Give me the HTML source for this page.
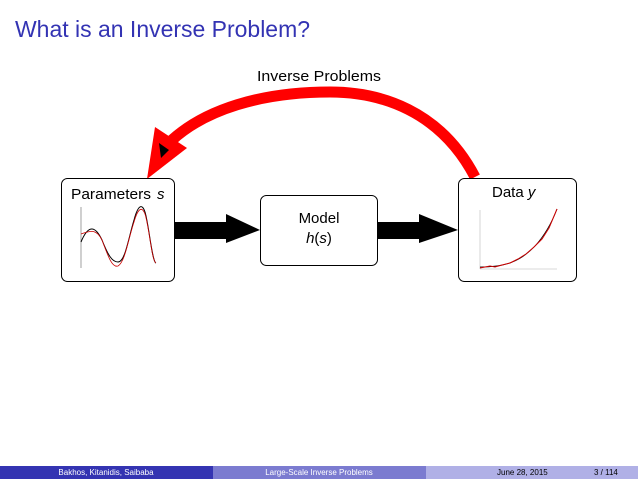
<!DOCTYPE html>
<html><head><meta charset="utf-8"><style>
body{margin:0;background:#fff}
svg{display:block}
text{font-family:"Liberation Sans",sans-serif}
</style></head><body>
<svg width="638" height="479" viewBox="0 0 638 479" xmlns="http://www.w3.org/2000/svg">
<text x="15" y="37" font-size="23" fill="#3333b3" textLength="295" lengthAdjust="spacingAndGlyphs">What is an Inverse Problem?</text>
<text x="257" y="81" font-size="15" fill="#000" textLength="124" lengthAdjust="spacingAndGlyphs">Inverse Problems</text>
<!-- red arc -->
<path d="M475 177 C440 110 380 92 330 92 C260 92 205 110 172 140" fill="none" stroke="#f00" stroke-width="11"/>
<polygon points="147,179 155,127 187,148" fill="#f00"/>
<polygon points="159,143 169,150 161,158" fill="#000"/>
<!-- boxes -->
<rect x="61.5" y="178.5" width="113" height="103" rx="6" fill="#fff" stroke="#000" stroke-width="1"/>
<text x="71" y="199" font-size="15" textLength="80" lengthAdjust="spacingAndGlyphs">Parameters</text><text x="157" y="199" font-size="15" font-style="italic">s</text>
<rect x="260.5" y="195.5" width="117" height="70" rx="6" fill="#fff" stroke="#000"/>
<text x="319" y="223" font-size="15" text-anchor="middle">Model</text>
<text x="319" y="243" font-size="15" text-anchor="middle"><tspan font-style="italic">h</tspan>(<tspan font-style="italic">s</tspan>)</text>
<rect x="458.5" y="178.5" width="118" height="103" rx="6" fill="#fff" stroke="#000"/>
<text x="492" y="197" font-size="15">Data <tspan font-style="italic">y</tspan></text>
<!-- black arrows -->
<polygon points="175,222 226,222 226,214 260,230 226,243 226,239 175,239" fill="#000"/>
<polygon points="378,222 419,222 419,214 458,230 419,243 419,239 378,239" fill="#000"/>
<!-- plot in params -->
<line x1="81" y1="207" x2="81" y2="268" stroke="#888" stroke-width="0.8"/>
<path d="M81 242 C88 225 95 225 102 240 C108 255 112 262 118 262 C125 262 128 240 134 220 C138 205 142 203 145 212 C149 225 152 262 156 263" fill="none" stroke="#000" stroke-width="1"/>
<path d="M81 234 C90 231 96 228 102 240 C108 256 112 268 118 266 C125 262 128 240 134 222 C138 208 142 206 145 214 C149 226 152 262 156 263" fill="none" stroke="#c00" stroke-width="0.8"/>
<!-- plot in data -->
<line x1="480" y1="210" x2="480" y2="269" stroke="#ccc" stroke-width="0.8"/>
<line x1="480" y1="269" x2="557" y2="269" stroke="#ccc" stroke-width="0.8"/>
<path d="M480 267 C505 267 520 262 535 246 C545 235 552 222 557 209" fill="none" stroke="#000" stroke-width="0.8"/>
<path d="M480 268 L490 266 L495 267 L502 265 L510 263 L518 259 L526 254 L534 247 L542 239 L549 228 L557 209" fill="none" stroke="#c00" stroke-width="1"/>
<!-- footer -->
<rect x="0" y="466" width="213" height="13" fill="#3434b2"/>
<rect x="213" y="466" width="213" height="13" fill="#7b7bd0"/>
<rect x="426" y="466" width="212" height="13" fill="#b0b0e6"/>
<text x="106" y="475" font-size="8" fill="#fff" text-anchor="middle">Bakhos, Kitanidis, Saibaba</text>
<text x="319" y="475" font-size="8" fill="#fff" text-anchor="middle">Large-Scale Inverse Problems</text>
<text x="497" y="475" font-size="8" fill="#000">June 28, 2015</text>
<text x="594" y="475" font-size="8" fill="#000">3 / 114</text>
</svg>
</body></html>
